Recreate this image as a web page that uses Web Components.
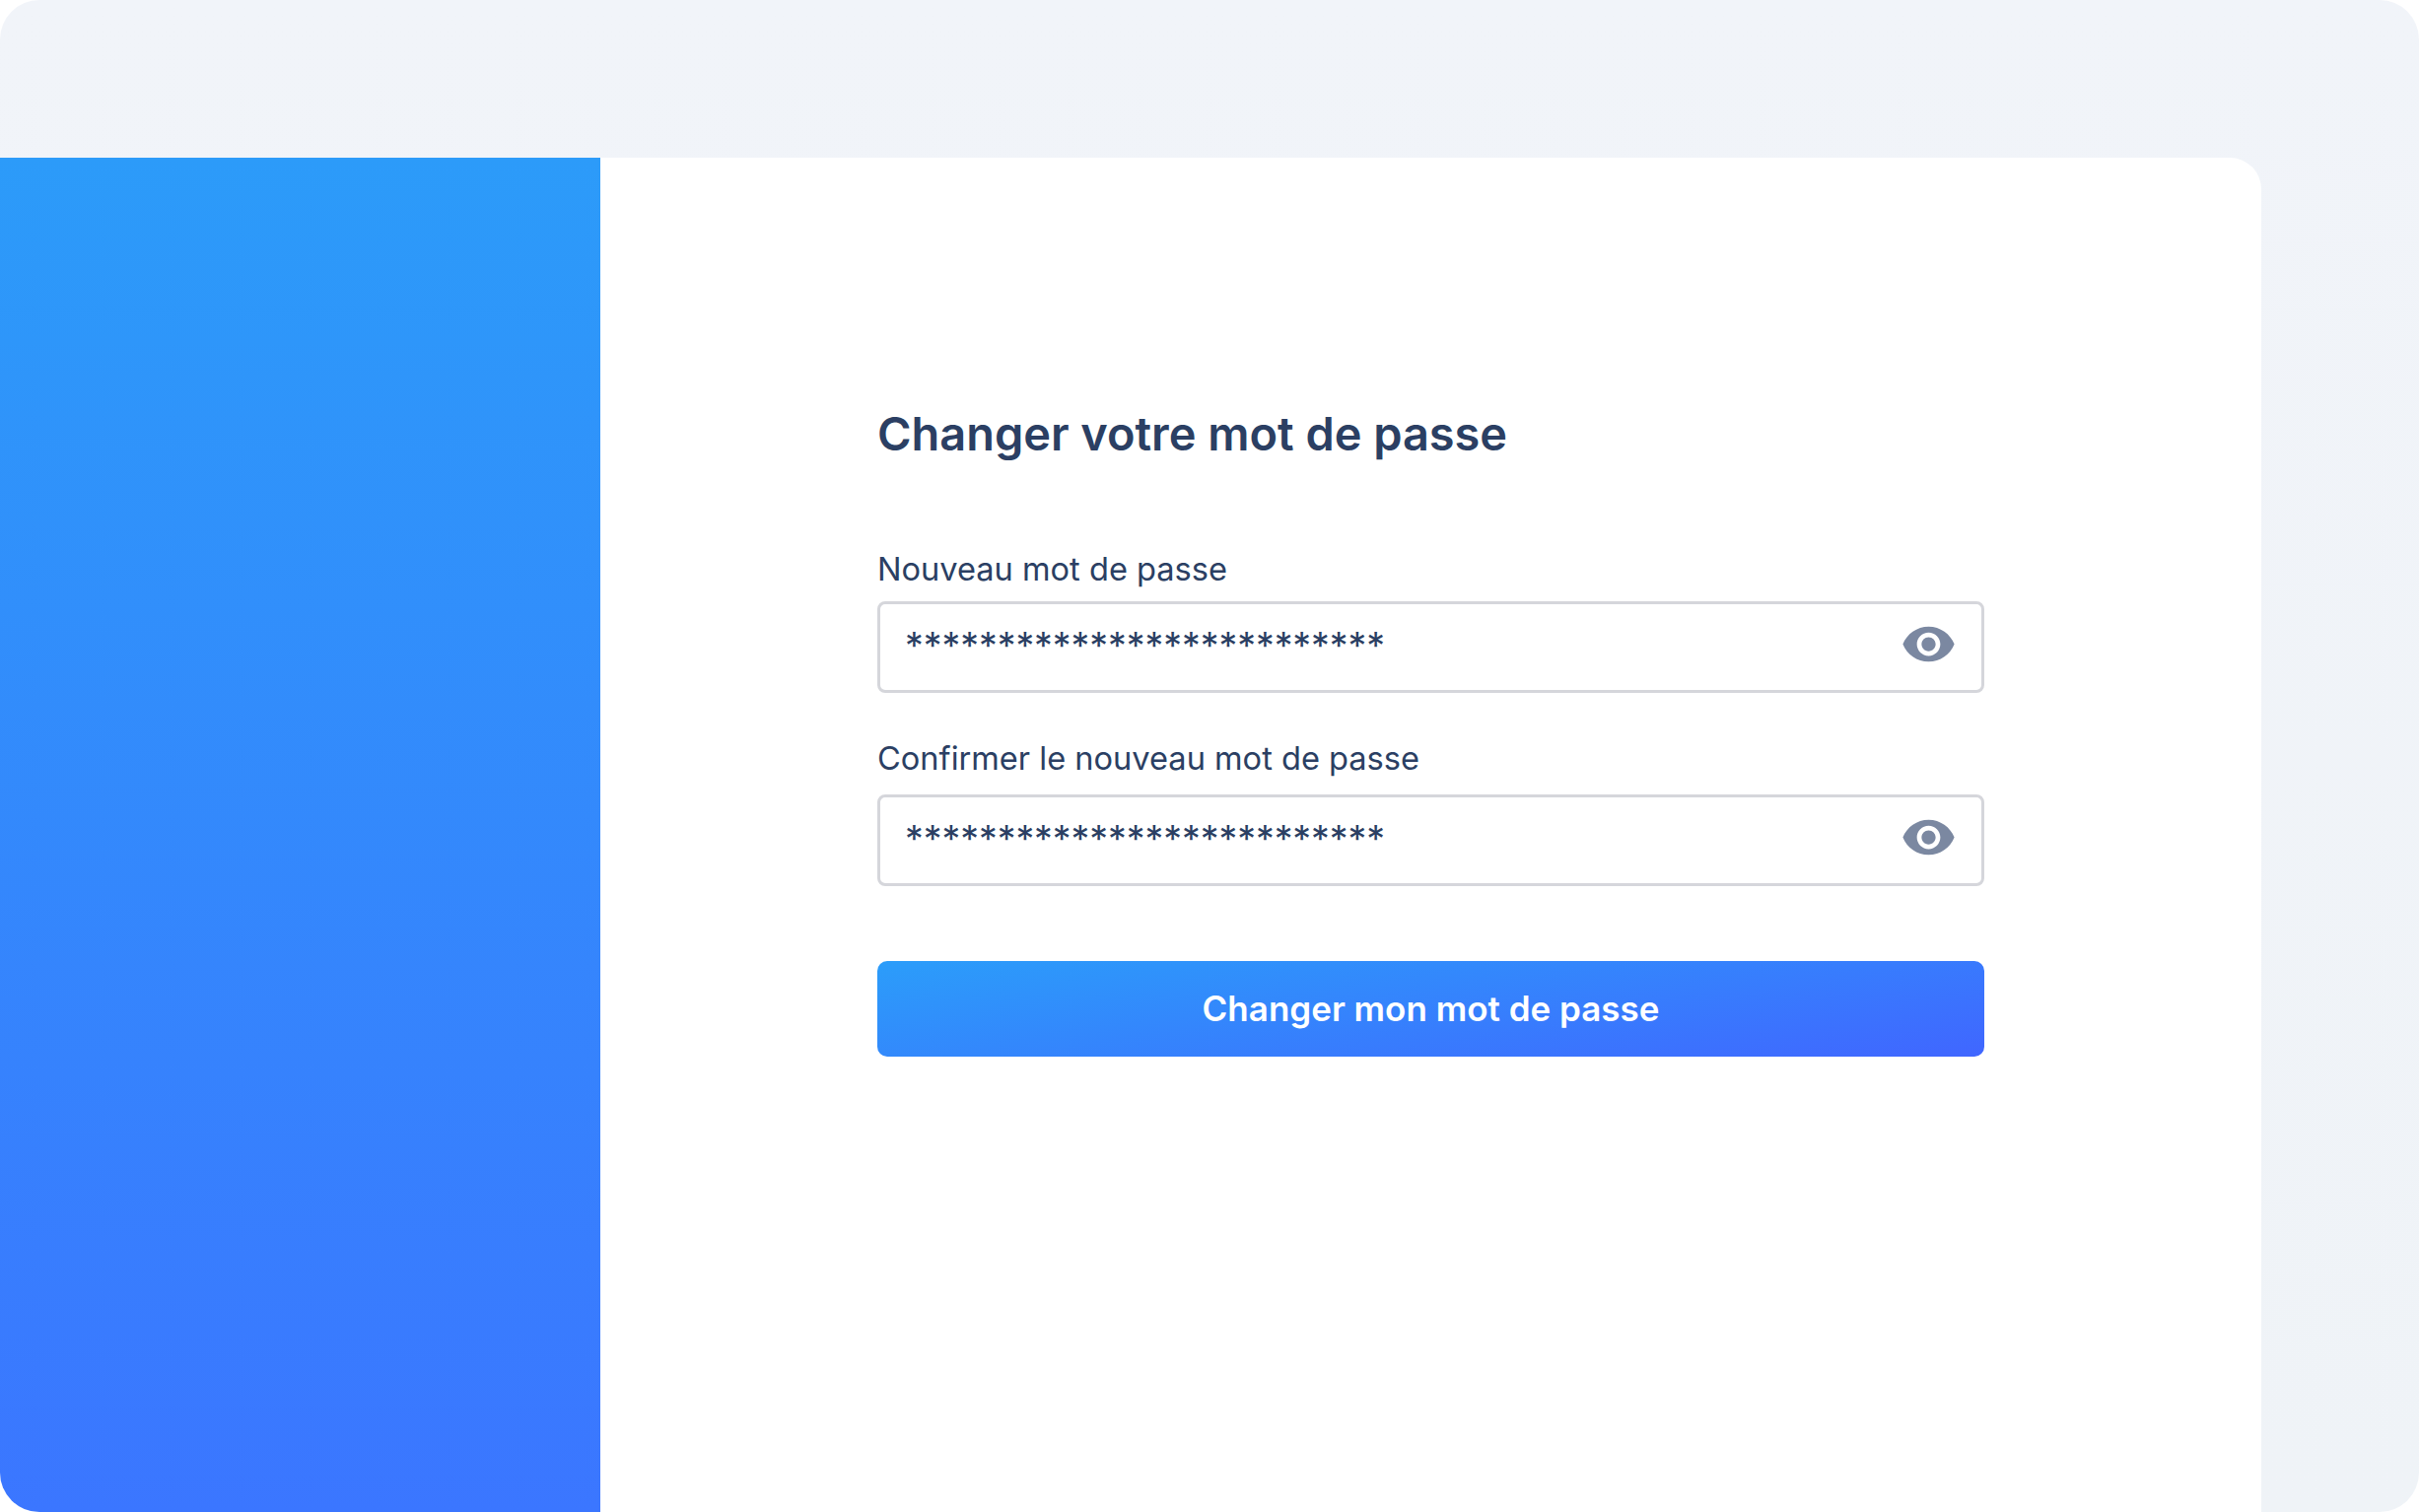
<!DOCTYPE html>
<html lang="fr">
<head>
<meta charset="utf-8">
<title>Changer votre mot de passe</title>
<style>
  html, body { margin: 0; padding: 0; background: #fff; }
  body { font-family: "Inter", "Liberation Sans", sans-serif; color: #2b3f63; }
</style>
</head>
<body>
<app-frame>
  <change-password-form>
    <password-field label="Nouveau mot de passe" style="--label-gap: 12px"></password-field>
    <password-field label="Confirmer le nouveau mot de passe" style="--label-gap: 16px"></password-field>
  </change-password-form>
</app-frame>

<script>
const frameTemplate = document.createElement('template');
frameTemplate.innerHTML = `
  <style>
    :host {
      display: block;
      width: 2454px;
      height: 1534px;
      overflow: hidden;
      box-sizing: border-box;
      padding: 160px 160px 0 0;
      background: linear-gradient(180deg, #f1f4f9 0%, #eff3f7 100%);
      border-radius: 40px;
    }
    .shell {
      display: flex;
      height: 100%;
    }
    .side {
      flex: 0 0 609px;
      background: linear-gradient(180deg, #2c9bf9 0%, #3b76ff 100%);
    }
    .main {
      flex: 1;
      display: flex;
      flex-direction: column;
      background: #fff;
      border-top-right-radius: 32px;
      padding: 252px 281px 0 281px;
    }
  </style>
  <div class="shell">
    <div class="side"></div>
    <div class="main"><slot></slot></div>
  </div>
`;

class AppFrame extends HTMLElement {
  constructor(){
    super();
    this.attachShadow({mode: 'open'});
    this.shadowRoot.appendChild(frameTemplate.content.cloneNode(true));
  }
}

const formTemplate = document.createElement('template');
formTemplate.innerHTML = `
  <style>
    :host {
      display: flex;
      flex-direction: column;
    }
    h1 {
      margin: 0 0 88px;
      font-size: 46.9px;
      line-height: 56px;
      font-weight: 600;
      color: #2b3f63;
    }
    .fields {
      display: flex;
      flex-direction: column;
      gap: 45px;
    }
    button {
      margin-top: 76px;
      height: 97px;
      border: 0;
      border-radius: 10px;
      font: 600 35px/44px "Inter", "Liberation Sans", sans-serif;
      color: #fff;
      background: linear-gradient(171deg, #2b9dfa 0%, #4066ff 100%);
      padding: 0 0 2px;
    }
  </style>
  <h1>Changer votre mot de passe</h1>
  <div class="fields"><slot></slot></div>
  <button type="button">Changer mon mot de passe</button>
`;

class ChangePasswordForm extends HTMLElement {
  constructor(){
    super();
    this.attachShadow({mode: 'open'});
    this.shadowRoot.appendChild(formTemplate.content.cloneNode(true));
  }
}

const fieldTemplate = document.createElement('template');
fieldTemplate.innerHTML = `
  <style>
    :host {
      display: flex;
      flex-direction: column;
    }
    label {
      font-size: 32.6px;
      line-height: 42px;
      color: #2b3f63;
      margin-bottom: var(--label-gap, 12px);
    }
    .box {
      display: flex;
      align-items: center;
      justify-content: space-between;
      box-sizing: border-box;
      height: 93px;
      padding: 0 25px 4px 25px;
      border: 3px solid #d5d6db;
      border-radius: 8px;
      background: #fff;
    }
    .value {
      font-size: 37.4px;
      line-height: 40px;
      color: #2b3f63;
    }
    svg {
      width: 57px;
      height: 57px;
      margin-top: -2px;
      fill: #7b88a1;
      display: block;
    }
  </style>
  <label id="label"></label>
  <div class="box">
    <span class="value">**************************</span>
    <svg viewBox="0 0 24 24" aria-hidden="true">
      <path d="M12 4.5C7 4.5 2.73 7.61 1 12c1.73 4.39 6 7.5 11 7.5s9.27-3.11 11-7.5c-1.73-4.39-6-7.5-11-7.5zM12 17c-2.76 0-5-2.24-5-5s2.24-5 5-5 5 2.24 5 5-2.24 5-5 5zm0-8c-1.66 0-3 1.34-3 3s1.34 3 3 3 3-1.34 3-3-1.34-3-3-3z"/>
    </svg>
  </div>
`;

class PasswordField extends HTMLElement {
  constructor(){
    super();
    this.attachShadow({mode: 'open'});
    this.shadowRoot.appendChild(fieldTemplate.content.cloneNode(true));
    this.shadowRoot.getElementById('label').textContent = this.getAttribute('label');
  }
}

customElements.define('app-frame', AppFrame);
customElements.define('change-password-form', ChangePasswordForm);
customElements.define('password-field', PasswordField);
</script>
</body>
</html>
